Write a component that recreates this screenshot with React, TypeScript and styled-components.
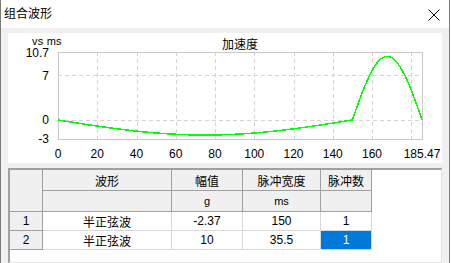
import React from "react";
import styled, { createGlobalStyle } from "styled-components";

const GlobalStyle = createGlobalStyle`
  html, body {
    margin: 0;
    padding: 0;
    background: #ffffff;
  }
  * {
    box-sizing: border-box;
  }
`;

const FONT = `"Liberation Sans", "Noto Sans CJK SC", sans-serif`;

// chart geometry (svg coords inside the white panel)
const PLOT = { left: 50, right: 414, top: 19, bottom: 106 };
const X_MAX = 185.47;
const Y_MAX = 10.7;
const Y_MIN = -3;

const sx = (t: number) =>
  PLOT.left + (t * (PLOT.right - PLOT.left)) / X_MAX;
const sy = (v: number) =>
  PLOT.top + ((Y_MAX - v) * (PLOT.bottom - PLOT.top)) / (Y_MAX - Y_MIN);

type Pulse = { shape: string; amp: number; width: number; count: number };

const pulses: Pulse[] = [
  { shape: "半正弦波", amp: -2.37, width: 150, count: 1 },
  { shape: "半正弦波", amp: 10, width: 35.5, count: 1 },
];

const buildWave = () => {
  const pts: string[] = [];
  let start = 0;
  pulses.forEach((p) => {
    const steps = Math.round(p.width * 2);
    for (let i = 0; i <= steps; i++) {
      const t = (i / steps) * p.width;
      const v = p.amp * Math.sin((Math.PI * t) / p.width);
      pts.push(`${sx(start + t).toFixed(2)},${sy(v).toFixed(2)}`);
    }
    start += p.width;
  });
  return pts.join(" ");
};

const xTicks = [20, 40, 60, 80, 100, 120, 140, 160, 180];
const xLabels = [0, 20, 40, 60, 80, 100, 120, 140, 160];

const Chart: React.FC = () => (
  <ChartSvg width={434} height={130} viewBox="0 0 434 130">
    <text x={24} y={12} fontSize={11} fill="#000" letterSpacing={0.2}>
      vs ms
    </text>
    <text x={232} y={16} fontSize={12} textAnchor="middle" fill="#000">
      加速度
    </text>

    <g stroke="#d4d4d4" strokeDasharray="4 3" shapeRendering="crispEdges">
      {xTicks.map((t) => (
        <line
          key={t}
          x1={Math.round(sx(t)) + 0.5}
          x2={Math.round(sx(t)) + 0.5}
          y1={PLOT.top}
          y2={PLOT.bottom}
        />
      ))}
      {[7, 0].map((v) => (
        <line
          key={v}
          x1={PLOT.left}
          x2={PLOT.right}
          y1={Math.round(sy(v)) + 0.5}
          y2={Math.round(sy(v)) + 0.5}
        />
      ))}
    </g>

    <rect
      x={PLOT.left + 0.5}
      y={PLOT.top + 0.5}
      width={PLOT.right - PLOT.left}
      height={PLOT.bottom - PLOT.top}
      fill="none"
      stroke="#c8c8c8"
      shapeRendering="crispEdges"
    />

    <polyline
      points={buildWave()}
      fill="none"
      stroke="#00ff00"
      strokeWidth={1.5}
      shapeRendering="crispEdges"
    />

    <g fontSize={12} fill="#000" textAnchor="end">
      <text x={41} y={24}>10.7</text>
      <text x={41} y={sy(7) + 4.5}>7</text>
      <text x={41} y={sy(0) + 4.5}>0</text>
      <text x={41} y={110}>-3</text>
    </g>

    <g fontSize={12} fill="#000" textAnchor="middle">
      {xLabels.map((t) => (
        <text key={t} x={sx(t)} y={125}>
          {t}
        </text>
      ))}
      <text x={PLOT.right} y={125}>
        185.47
      </text>
    </g>
  </ChartSvg>
);

const CloseIcon: React.FC = () => (
  <svg width={12} height={12} viewBox="0 0 12 12">
    <path d="M0.5 0.5 L11.5 11.5 M11.5 0.5 L0.5 11.5" stroke="#000" strokeWidth={1} />
  </svg>
);

const App: React.FC = () => {
  return (
    <>
      <GlobalStyle />
      <Window>
        <TitleBar>
          <Title>组合波形</Title>
          <CloseButton>
            <CloseIcon />
          </CloseButton>
        </TitleBar>
        <Body>
          <ChartPanel>
            <Chart />
          </ChartPanel>
          <TableFrame>
            <Grid>
              <HeadCell $rowSpan={2} />
              <HeadCell>波形</HeadCell>
              <HeadCell>幅值</HeadCell>
              <HeadCell>脉冲宽度</HeadCell>
              <HeadCell>脉冲数</HeadCell>
              <HeadCell />
              <HeadCell $small>g</HeadCell>
              <HeadCell $small>ms</HeadCell>
              <HeadCell />
              {pulses.map((p, i) => (
                <React.Fragment key={i}>
                  <RowHead>{i + 1}</RowHead>
                  <DataCell>{p.shape}</DataCell>
                  <DataCell>{p.amp}</DataCell>
                  <DataCell>{p.width}</DataCell>
                  <DataCell $selected={i === pulses.length - 1}>
                    {p.count}
                  </DataCell>
                </React.Fragment>
              ))}
            </Grid>
          </TableFrame>
        </Body>
      </Window>
    </>
  );
};

export default App;

// Styled Components

const Window = styled.div`
  width: 450px;
  height: 263px;
  display: flex;
  flex-direction: column;
  border-left: 1px solid #7a7a7a;
  border-right: 1px solid #7a7a7a;
  font-family: ${FONT};
  color: #000;
  background: #f0f0f0;
`;

const TitleBar = styled.div`
  height: 28px;
  flex: none;
  display: flex;
  align-items: center;
  justify-content: space-between;
  padding: 0 9px 0 3px;
  background: #ffffff;
`;

const Title = styled.span`
  font-size: 12px;
  line-height: 1;
  margin-top: -1px;
`;

const CloseButton = styled.span`
  display: flex;
  align-items: center;
  margin-top: 1px;
`;

const Body = styled.div`
  flex: 1;
  display: flex;
  flex-direction: column;
  gap: 5px;
  padding: 5px 7px 0 7px;
`;

const ChartPanel = styled.div`
  height: 130px;
  flex: none;
  background: #ffffff;
`;

const ChartSvg = styled.svg`
  display: block;
  font-family: ${FONT};
`;

const TableFrame = styled.div`
  flex: 1;
  background: #ffffff;
  border-top: 2px solid #a0a0a0;
  border-left: 2px solid #a0a0a0;
  border-right: 1px solid #e3e3e3;
  border-bottom: 1px solid #e3e3e3;
`;

const Grid = styled.div`
  display: grid;
  grid-template-columns: 33px 129px 71px 78px 51px;
  grid-template-rows: 21px 21px 19px 19px;
  font-size: 12px;
`;

const HeadCell = styled.div<{ $rowSpan?: number; $small?: boolean }>`
  grid-row: span ${(p) => p.$rowSpan ?? 1};
  display: flex;
  align-items: center;
  justify-content: center;
  background: #f0f0f0;
  border-right: 1px solid #a0a0a0;
  border-bottom: 1px solid #a0a0a0;
  font-size: ${(p) => (p.$small ? "11px" : "12px")};
`;

const RowHead = styled.div`
  display: flex;
  align-items: center;
  justify-content: center;
  background: #f0f0f0;
  border-right: 1px solid #a0a0a0;
  border-bottom: 1px solid #a0a0a0;
`;

const DataCell = styled.div<{ $selected?: boolean }>`
  display: flex;
  align-items: center;
  justify-content: center;
  background: ${(p) => (p.$selected ? "#0078d7" : "#ffffff")};
  color: ${(p) => (p.$selected ? "#ffffff" : "#000000")};
  border-right: 1px solid #d8d8d8;
  border-bottom: 1px solid #d8d8d8;
`;
